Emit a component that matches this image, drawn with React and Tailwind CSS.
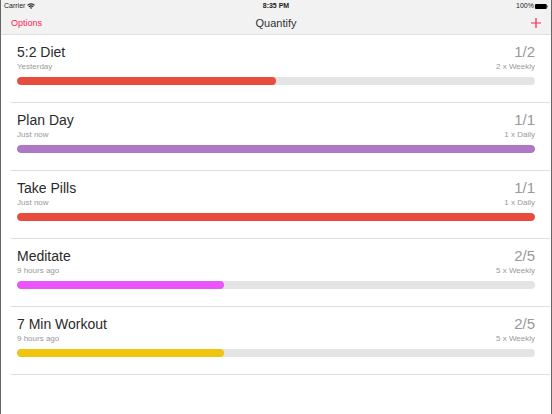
import clsx from "clsx";

const HABITS = [
  { id: "diet", name: "5:2 Diet", last: "Yesterday", done: 1, goal: 2, period: "Weekly", color: "bg-[#e74c3c]" },
  { id: "plan", name: "Plan Day", last: "Just now", done: 1, goal: 1, period: "Daily", color: "bg-[#ae78c6]" },
  { id: "pills", name: "Take Pills", last: "Just now", done: 1, goal: 1, period: "Daily", color: "bg-[#e74c3c]" },
  { id: "meditate", name: "Meditate", last: "9 hours ago", done: 2, goal: 5, period: "Weekly", color: "bg-[#e956fb]" },
  { id: "workout", name: "7 Min Workout", last: "9 hours ago", done: 2, goal: 5, period: "Weekly", color: "bg-[#f1c40f]" },
];

function WifiIcon() {
  return (
    <svg width="8" height="6" viewBox="0 0 16 12" fill="none" stroke="#222" strokeWidth="2.2" aria-hidden="true">
      <path d="M1 4.6a10 10 0 0 1 14 0" />
      <path d="M3.6 7.6a6.2 6.2 0 0 1 8.8 0" />
      <path d="M8 12 5.6 9.6a3.4 3.4 0 0 1 4.8 0z" fill="#222" stroke="none" />
    </svg>
  );
}

function BatteryIcon() {
  return (
    <svg width="13" height="5" viewBox="0 0 26 10" fill="#000" aria-hidden="true">
      <rect x="0" y="0" width="23.5" height="10" rx="2" />
      <path d="M24.3 3c1.6.3 1.6 3.7 0 4z" />
    </svg>
  );
}

function StatusBar() {
  return (
    <div className="grid grid-cols-3 items-center px-[3px] pt-[2px] text-[7px] leading-[8px] text-[#222]">
      <div className="flex items-center gap-[2px]">
        <span>Carrier</span>
        <WifiIcon />
      </div>
      <span className="text-center font-bold">8:35 PM</span>
      <div className="flex items-center justify-end gap-px">
        <span>100%</span>
        <BatteryIcon />
      </div>
    </div>
  );
}

function NavBar() {
  return (
    <nav className="grid grid-cols-3 items-center px-[10px] pt-[6px] pb-1">
      <button type="button" className="justify-self-start text-[9px] leading-[14px] text-[#fc2257]">
        Options
      </button>
      <h1 className="text-center text-[11px] leading-[14px] text-[#333]">Quantify</h1>
      <button type="button" className="justify-self-end" aria-label="Add habit">
        <svg className="block" width="10" height="10" viewBox="0 0 10 10" stroke="#fc2257" strokeWidth="1.2" aria-hidden="true">
          <path d="M5 0v10M0 5h10" />
        </svg>
      </button>
    </nav>
  );
}

function HabitRow({ habit }) {
  const percent = (habit.done / habit.goal) * 100;

  return (
    <li className="border-b border-[#dedede] pt-[7px] pr-[15px] pb-[17px] pl-[6px]">
      <div className="flex items-center justify-between leading-[20px]">
        <h2 className="text-[14px] text-[#2a2a2a]">{habit.name}</h2>
        <span className="text-[15px] text-[#999]">{habit.done}/{habit.goal}</span>
      </div>
      <div className="flex items-center justify-between text-[8px] leading-[10px] text-[#999]">
        <span>{habit.last}</span>
        <span>{habit.goal} x {habit.period}</span>
      </div>
      <div
        className="mt-[5px] h-2 overflow-hidden rounded-full bg-[#e4e4e4]"
        role="progressbar"
        aria-label={habit.name}
        aria-valuenow={habit.done}
        aria-valuemax={habit.goal}
      >
        <div className={clsx("h-full rounded-full", habit.color)} style={{ width: `${percent}%` }} />
      </div>
    </li>
  );
}

export default function App() {
  return (
    <div className="min-h-screen border-x border-[#666] bg-white font-['Liberation_Sans',sans-serif]">
      <header className="border-b border-[#e0e0e0] bg-[#f2f2f2]">
        <StatusBar />
        <NavBar />
      </header>
      <ul className="mr-px ml-[10px]">
        {HABITS.map((habit) => (
          <HabitRow key={habit.id} habit={habit} />
        ))}
      </ul>
    </div>
  );
}
